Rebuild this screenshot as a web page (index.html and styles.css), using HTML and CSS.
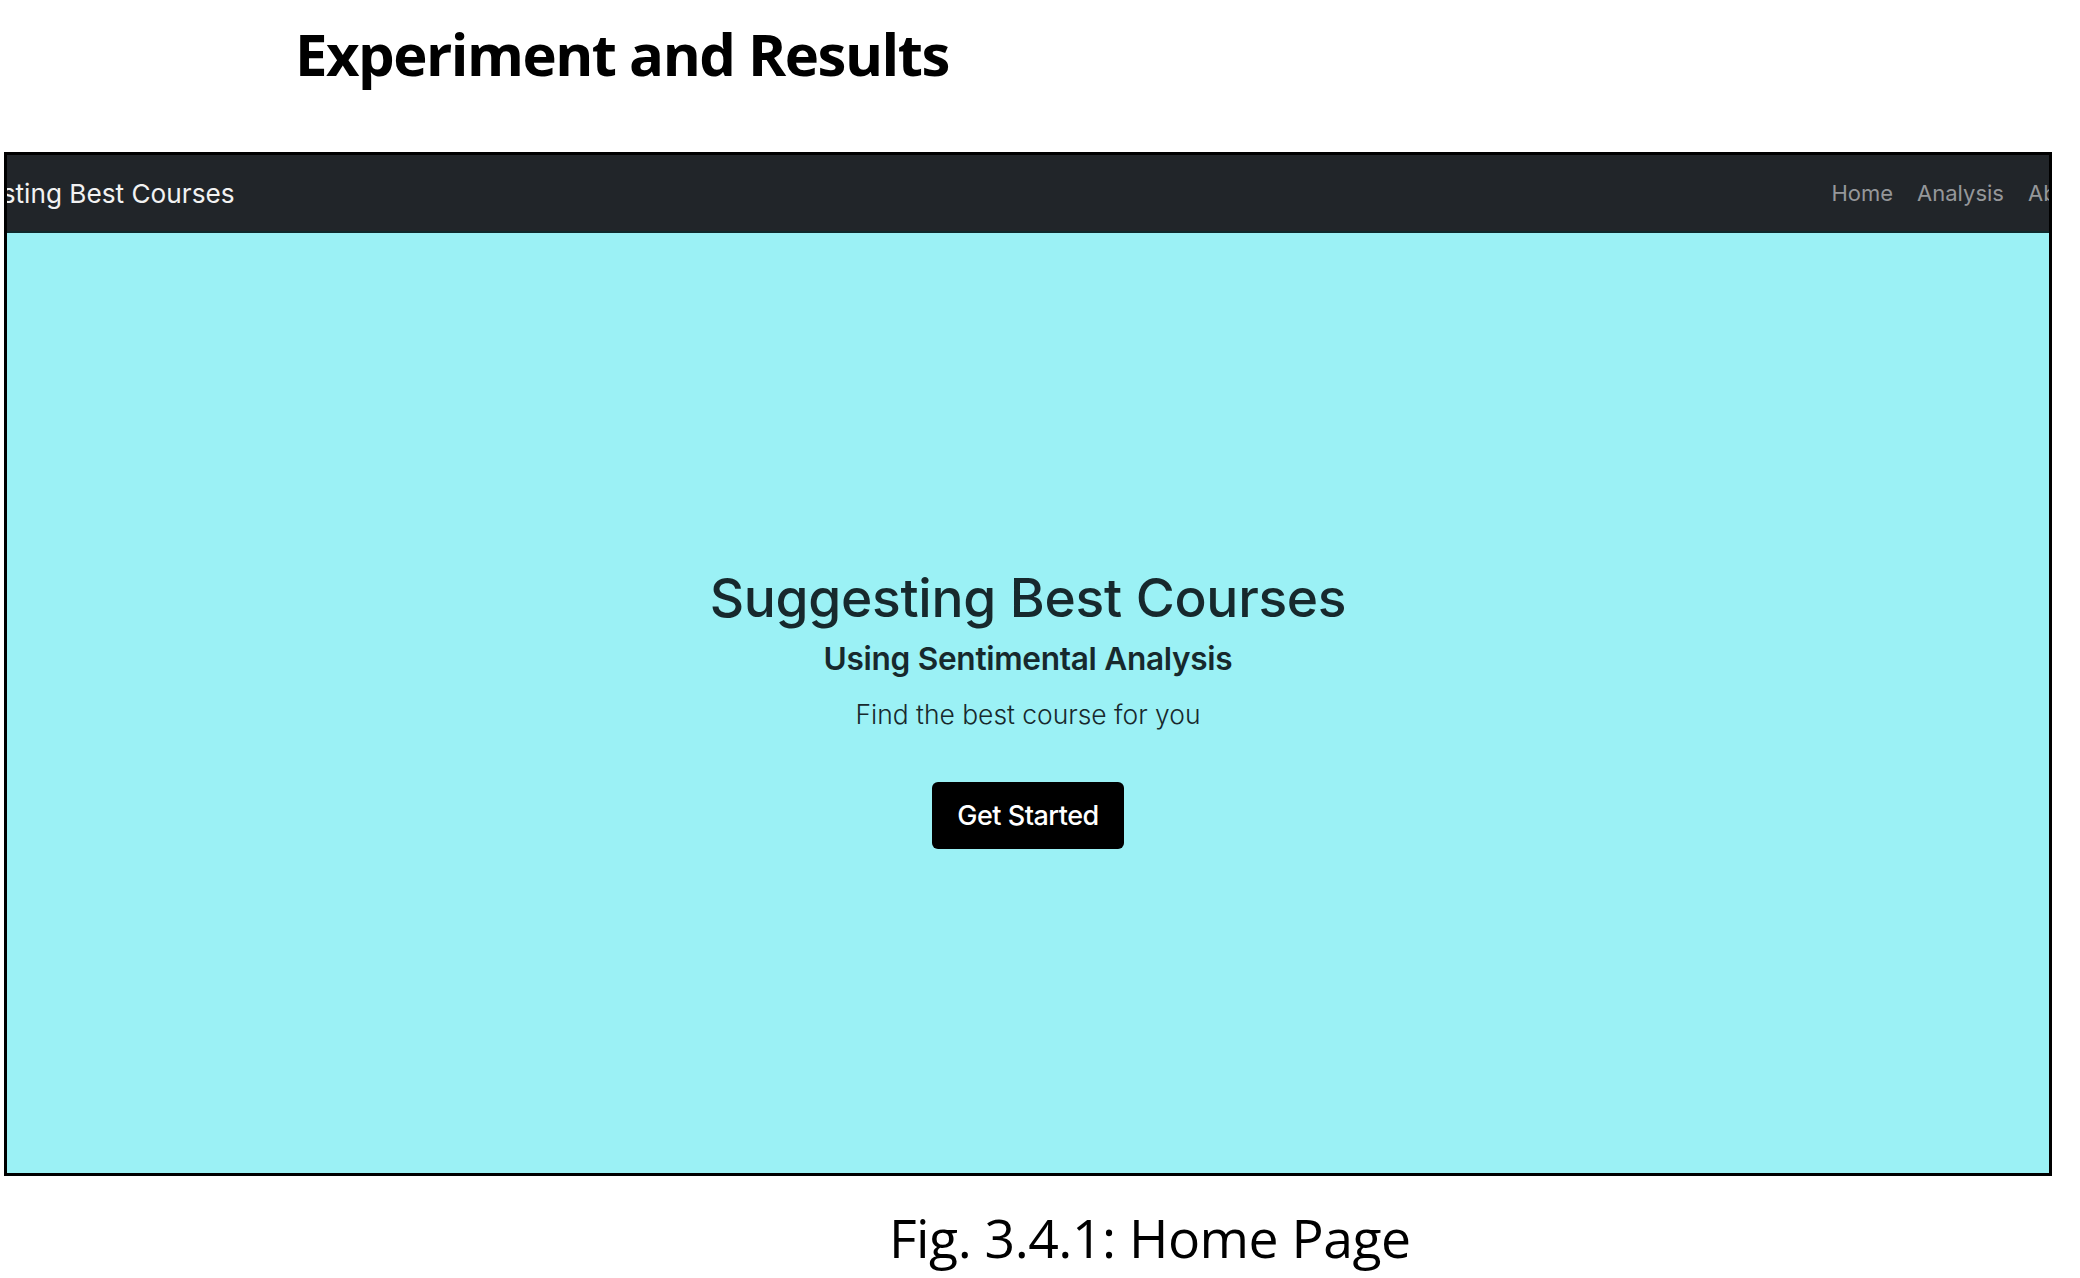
FILE: index.html
```html
<!DOCTYPE html>
<html lang="en">
<head>
<meta charset="utf-8">
<title>Experiment and Results</title>
<link rel="stylesheet" href="styles.css">
</head>
<body>
  <h1 class="doc-heading">Experiment and Results</h1>
  <div class="shot">
    <nav class="navbar">
      <span class="brand">Suggesting Best Courses</span>
      <ul class="nav-links">
        <li>Home</li>
        <li>Analysis</li>
        <li>About</li>
      </ul>
    </nav>
    <section class="hero">
      <h2 class="hero-title">Suggesting Best Courses</h2>
      <h3 class="hero-sub">Using Sentimental Analysis</h3>
      <p class="hero-text">Find the best course for you</p>
      <button class="btn-start">Get Started</button>
    </section>
  </div>
  <p class="caption">Fig. 3.4.1: Home Page</p>
</body>
</html>
```
FILE: styles.css
```css
html, body {
  margin: 0;
  padding: 0;
  background: #ffffff;
}

body {
  width: 2080px;
  height: 1278px;
  overflow: hidden;
}

.doc-heading {
  margin: 0;
  padding: 14px 0 0 295px;
  height: 152px;
  box-sizing: border-box;
  font-family: "Open Sans", "Noto Sans", sans-serif;
  font-weight: 700;
  font-size: 58px;
  line-height: 80px;
  letter-spacing: -1.5px;
  color: #000;
}

.shot {
  margin-left: 4px;
  width: 2048px;
  height: 1024px;
  box-sizing: border-box;
  border: 3px solid #000;
  overflow: hidden;
  display: flex;
  flex-direction: column;
}

.navbar {
  height: 78px;
  flex: none;
  box-sizing: border-box;
  background: #212529;
  border-bottom: 2px solid #10292c;
  display: flex;
  align-items: center;
  justify-content: space-between;
  overflow: hidden;
  font-family: Inter, Roboto, sans-serif;
}

.brand {
  margin-left: -85px;
  font-size: 26.2px;
  font-weight: 400;
  color: #f2f2f2;
  white-space: nowrap;
}

.nav-links {
  list-style: none;
  margin: 0 -41px 0 0;
  padding: 0;
  display: flex;
  gap: 24px;
  font-size: 22px;
  color: #95979a;
}

.hero {
  flex: 1;
  background: #9bf1f5;
  display: flex;
  flex-direction: column;
  align-items: center;
  justify-content: center;
  padding-top: 9px;
  font-family: Inter, Roboto, sans-serif;
  color: #17292d;
}

.hero-title {
  margin: 0;
  font-size: 53.3px;
  font-weight: 500;
  line-height: 62px;
  letter-spacing: -0.3px;
}

.hero-sub {
  margin: 9px 0 0;
  font-size: 31.6px;
  font-weight: 600;
  line-height: 41px;
  letter-spacing: -0.3px;
}

.hero-text {
  margin: 13px 0 0;
  font-size: 26.4px;
  font-weight: 300;
  line-height: 45px;
}

.btn-start {
  margin-top: 45px;
  height: 67px;
  width: 192px;
  border: none;
  border-radius: 6px;
  background: #000;
  color: #fff;
  font-family: Inter, Roboto, sans-serif;
  font-size: 27px;
  font-weight: 500;
  letter-spacing: -0.5px;
  padding: 0;
}

.caption {
  margin: 0;
  padding: 24px 0 0 889px;
  font-family: "Open Sans", "Noto Sans", sans-serif;
  font-size: 53.5px;
  line-height: 76px;
  letter-spacing: -0.5px;
  color: #000;
}
```
